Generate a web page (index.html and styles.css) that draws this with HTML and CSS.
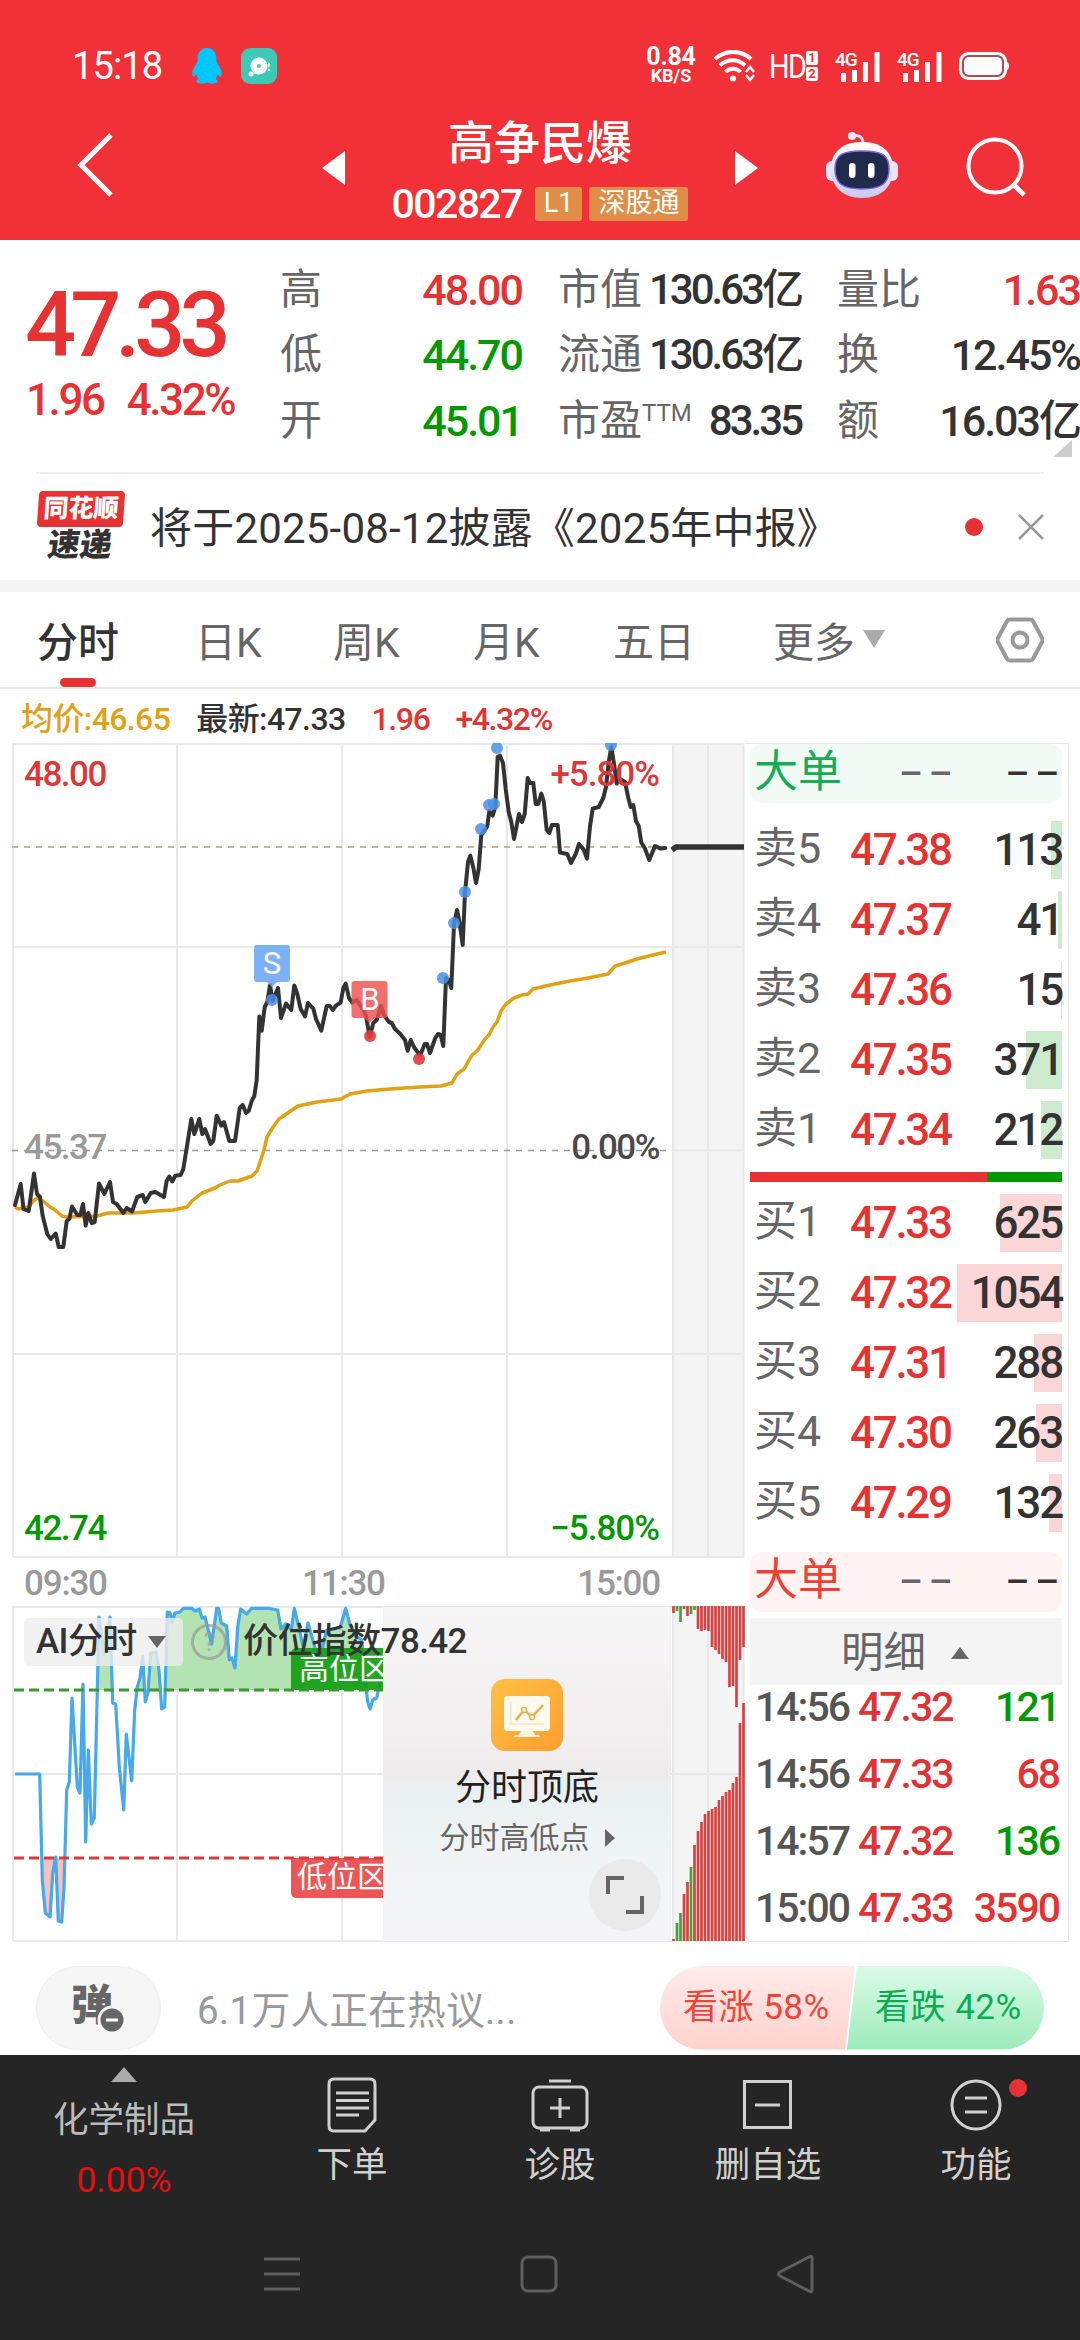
FILE: index.html
```
<!DOCTYPE html>
<html lang="zh-CN">
<head>
    <meta charset="UTF-8">
    <meta name="viewport" content="width=device-width, initial-scale=1.0">
    <title>高争民爆 002827</title>
    <link rel="stylesheet" href="styles.css">
</head>
<body>
    <header>
        <div class="status-bar">
            <span class="clock">15:18</span>
            <svg class="qq" width="30" height="36" viewBox="0 0 30 36"><path d="M15 0c7 0 9.500 5 9.500 12 0 3 3 6 4.500 10 1.500 4 .5 7-1 6.500-1 0-2-2-2.500-2-.5 2-1 3-2 4.500 2 1 2.500 2 1.500 3.500-3 1.500-7 1.500-10 0-3 1.500-7 1.500-10 0-1-1.500-.5-2.500 1.500-3.500-1-1.500-1.500-2.500-2-4.500-.5 0-1.500 2-2.500 2-1.500.5-2.500-2.500-1-6.500 1.500-4 4.500-7 4.500-10C5.500 5 8 0 15 0z" fill="#00c8ff"/></svg>
            <svg width="36" height="36" viewBox="0 0 36 36"><rect width="36" height="36" rx="9" fill="#3ec9b6"/><circle cx="18" cy="18" r="8.500" fill="#fff"/><circle cx="18" cy="18" r="2" fill="#3ec9b6"/><circle cx="10" cy="26" r="2.500" fill="#fff"/><path d="M28 15v4M28 21v2" stroke="#fff" stroke-width="1.500"/></svg>
            <div class="speed"><b>0.84</b><small>KB/S</small></div>
            <svg class="wifi" width="42" height="32" viewBox="0 0 42 32" fill="none" stroke="#fff" stroke-width="4"><path d="M1 9C11-.5 27-.5 37 9M6 15.500c7-7 18-7 25 0M11.500 22c4-4.500 11-4.500 15 0"/><circle cx="19" cy="28.500" r="1.500" stroke-width="3"/><path d="M32 22l4-5 4 5M32 25l4 5 4-5" stroke-width="2.500"/></svg>
            <span class="hd">HD</span>
            <span class="sim"><i>1</i><i>2</i></span>
            <svg class="signal" width="46" height="31" viewBox="0 0 46 31"><text x="0" y="15">4G</text><path d="M8.500 31v-9M19.500 31V19M30.500 31V11M42 31V1" stroke="#fff" stroke-width="5"/></svg>
            <svg class="signal" width="46" height="31" viewBox="0 0 46 31"><text x="0" y="15">4G</text><path d="M8.500 31v-9M19.500 31V19M30.500 31V11M42 31V1" stroke="#fff" stroke-width="5"/></svg>
            <svg class="battery" width="51" height="28" viewBox="0 0 51 28"><rect x="1.500" y="1.500" width="45" height="25" rx="8" fill="#b04a4e" stroke="#fff" stroke-width="3"/><rect x="5" y="5" width="38" height="18" rx="5" fill="#fff"/><path d="M47 9c4 2 4 8 0 10z" fill="#fff"/></svg>
        </div>
        <div class="title-bar">
            <svg width="38" height="66" viewBox="0 0 38 66"><path d="M35 3L5 33l30 30" fill="none" stroke="#fff" stroke-width="5"/></svg>
            <svg class="prev" width="23" height="34" viewBox="0 0 23 34"><path d="M23 0v34L0 17z" fill="#fff"/></svg>
            <div class="stock">
                <h1>高争民爆</h1>
                <div class="code"><span>002827</span><em>L1</em><em>深股通</em></div>
            </div>
            <svg class="next" width="23" height="34" viewBox="0 0 23 34"><path d="M0 0v34l23-17z" fill="#fff"/></svg>
            <svg class="robot" width="74" height="66" viewBox="0 0 74 66">
                <defs><linearGradient id="head" x1="0" y1="0" x2="0" y2="1"><stop offset="0" stop-color="#fff"/><stop offset="1" stop-color="#c9c9f0"/></linearGradient></defs>
                <path d="M27 4c7-2 11 1 11 8" fill="none" stroke="#e4e1fa" stroke-width="3"/>
                <circle cx="27" cy="4" r="4" fill="#eceafa"/>
                <rect x="1" y="29" width="72" height="20" rx="6" fill="#e6e5fa"/>
                <path d="M37 10c20 0 31 10 31 27S57 66 37 66 6 54 6 37 17 10 37 10z" fill="url(#head)"/>
                <path d="M37 19c20 0 27 4 27 18s-7 20-27 20-27-6-27-20 7-18 27-18z" fill="#1f2a4c" stroke="#7b62e6" stroke-width="1.500"/>
                <rect x="24" y="31" width="6.500" height="15" rx="3.200" fill="#fff"/>
                <rect x="43" y="31" width="6.500" height="15" rx="3.200" fill="#fff"/>
            </svg>
            <svg class="search" width="60" height="60" viewBox="0 0 60 60"><circle cx="29" cy="29" r="26.500" fill="none" stroke="#fff" stroke-width="4"/><path d="M47 47l11 11" stroke="#fff" stroke-width="5"/></svg>
        </div>
    </header>

    <section class="quote">
        <div class="price">
            <strong>47.33</strong>
            <div><span>1.96</span><span>4.32%</span></div>
        </div>
        <dl class="col-range">
            <div><dt>高</dt><dd class="up">48.00</dd></div>
            <div><dt>低</dt><dd class="down">44.70</dd></div>
            <div><dt>开</dt><dd class="down">45.01</dd></div>
        </dl>
        <dl class="col-value">
            <div><dt>市值</dt><dd>130.63亿</dd></div>
            <div><dt>流通</dt><dd>130.63亿</dd></div>
            <div><dt>市盈<sup>TTM</sup></dt><dd>83.35</dd></div>
        </dl>
        <dl class="col-volume">
            <div><dt>量比</dt><dd class="up">1.63</dd></div>
            <div><dt>换</dt><dd>12.45%</dd></div>
            <div><dt>额</dt><dd>16.03亿</dd></div>
        </dl>
        <span class="corner"></span>
    </section>

    <section class="news">
        <div class="news-logo"><b>同花顺</b><i>速递</i></div>
        <p>将于2025-08-12披露《2025年中报》</p>
        <span class="dot"></span>
        <svg width="26" height="26" viewBox="0 0 26 26"><path d="M1 1l24 24M25 1L1 25" stroke="#999" stroke-width="2.500"/></svg>
    </section>

    <nav class="tabs">
        <a class="active">分时</a>
        <a>日K</a>
        <a>周K</a>
        <a>月K</a>
        <a>五日</a>
        <a>更多<svg width="22" height="18" viewBox="0 0 22 18"><path d="M0 0h22L11 18z" fill="#aaa"/></svg></a>
        <svg class="setting" width="48" height="46" viewBox="0 0 48 46" fill="none" stroke="#999" stroke-width="4"><path d="M14 2.500h20q2 0 3 1.500l9 17q1 2 0 4l-9 17q-1 1.500-3 1.500H14q-2 0-3-1.500L2 25q-1-2 0-4l9-17q1-1.500 3-1.500z"/><circle cx="24" cy="23" r="7.500"/></svg>
    </nav>

    <div class="chart-info">
        <span class="avg">均价:46.65</span>
        <span>最新:47.33</span>
        <span class="up">1.96</span>
        <span class="up">+4.32%</span>
    </div>

    <main>
        <div class="charts">
            <svg class="price-chart" width="745" height="815" viewBox="0 0 745 815">
                <rect x="672" y="1" width="72" height="813" fill="#f4f4f4"/>
                <g class="grid">
                    <path d="M12 1h732M12 204h732M672 407.500h72M12 611h732M12 814h732"/>
                    <path d="M13 1v813M177 1v813M342 1v813M507 1v813M673 1v813M708 1v813M743.500 1v813"/>
                </g>
                <path d="M12 104h654" stroke="#b9a069" stroke-width="1.500" stroke-dasharray="6 6"/>
                <path d="M12 407.500h654" stroke="#999" stroke-width="1.500" stroke-dasharray="6 6"/>
                <text class="axis mid" x="24" y="416">45.37</text>
                <text class="axis dark" x="659" y="416" text-anchor="end">0.00%</text>
                <polyline class="avg-line" points="15,464 18,466 29,464 33,458 38,455 43,458 50,464 55,467 62,473 67,474 97,473 108,470 133,470 157,468 173,467 187,464 192,458 202,450 215,445 220,442 230,438 238,438 252,433 257,428 264,407 267,394 273,384 279,376 298,363 317,359 341,356 350,351 367,348 390,346 420,344 441,343 452,340 457,331 464,326 472,312 477,308 485,296 489,292 493,284 497,279 501,268 506,261 514,255 522,252 528,251 533,246 550,242 570,238 588,235 608,231 615,223 625,220 637,216 657,211 666,209"/>
                <polyline class="price-line" points="15,462 20.700,441 23.500,466 28.700,468 34,430.500 37,451 40,454 42.700,473 47.300,491 50.700,496 55.700,490.500 58.700,504 63.300,504 66.700,478 69.300,476 72,463.500 77.300,472 80.300,472 83,461 85.700,482.700 88.300,470 91.700,480 94.700,479 99,440.500 104.300,451 110,439 113,459 116.700,461 123.300,470 126.700,465 132,468.500 137.300,454 142.700,452 145.300,459 150.700,450 155.300,449 164,454 166.700,437.700 169.300,433.500 172.300,438.500 175.300,432.700 180.700,432 183.300,426 186.700,405 191.300,376 194.300,391 199.300,376 202.300,391 205,386 210.700,401 213.300,398 216.700,372.700 221.300,382.700 224,379 229.300,398 235,398 239.700,365 242.700,362 246,370 248.700,368 251.700,358 254.300,353 256.700,337 259.300,273.400 261.700,287.700 264.700,264 267.300,259 270,242 272.700,258 278,245 281,275 286,260.600 291.300,267 294.300,242.400 297.300,251 300.700,266 305,273.400 308,260 313.300,265.600 316,276 321.300,287.700 326.700,263 330,263 332.700,267 336,262.700 340.700,259.500 343.300,245 345.700,240.600 349,255 352.300,259.500 356.700,257 363.300,267 366,273 369.700,294 373.300,280 376.700,277 381,262.700 384,272 389,279 391.700,280 395,286 400,290.600 405,297 407.700,307.700 410.700,297 414,304 420,312.700 424.700,301 427,301 430,310 435.300,295 438,291 440.700,292 443.300,303 446,235 448.700,237 451.300,245 454,181.600 457,167 459.300,178 462.700,202 465,149.500 468,119 470.300,112.700 473.300,124.500 476,140 478.700,126 481.300,92 485,87 487.300,83 489.300,68 492.700,72.700 495.300,64 497.700,13.800 500,12.700 503,20 505.700,46 508.700,69 511.300,79 514,96 519,71 522,79 524.700,71 527.700,35 530,40 533.300,40 535.700,61 538.300,61 541.300,50.600 543.700,58 546.700,87 549.300,90 552,82 557.700,82 560,109.500 567.300,111 571,120 575.700,111 579,101 583.700,106.600 587,115.600 590,83.400 592.700,65.600 598.700,64 603.300,55 606,44 608.700,19 611.300,4 614.300,22.700 616.700,40.600 618.300,35 625,39 628.300,55 630.700,64 633.300,62 636,78 638.700,83 641.300,99.500 644.700,105 649.300,117 655,103 660.700,105.600 665.300,105"/>
                <path d="M672 107l4-3h68" fill="none" stroke="#333" stroke-width="5.500"/>
                <g fill="#4a90e8" fill-opacity=".85">
                    <circle cx="497" cy="5" r="6"/><circle cx="611" cy="2" r="6"/><circle cx="489" cy="62" r="6"/><circle cx="494" cy="61" r="6"/><circle cx="481" cy="86" r="6"/><circle cx="465" cy="149" r="6"/><circle cx="454" cy="180" r="6"/><circle cx="443" cy="235" r="6"/><circle cx="272" cy="257" r="6"/>
                </g>
                <g fill="#e33b3b" fill-opacity=".9"><circle cx="370" cy="293" r="6"/><circle cx="419" cy="316" r="6"/></g>
                <path d="M257 202h30q3 0 3 3v31q0 3-3 3h-10l-5 5-5-5h-10q-3 0-3-3v-31q0-3 3-3z" fill="#6aa7f1" fill-opacity=".88"/>
                <path d="M354.500 238h30q3 0 3 3v31q0 3-3 3h-10l-5 5-5-5h-10q-3 0-3-3v-31q0-3 3-3z" fill="#ed4f4f" fill-opacity=".82"/>
                <text class="mark" x="272" y="231">S</text>
                <text class="mark" x="370" y="267">B</text>
                <text class="axis red" x="24" y="43">48.00</text>
                <text class="axis red wide" x="659" y="43" text-anchor="end">+5.80%</text>
                <text class="axis green" x="24" y="797">42.74</text>
                <text class="axis green wide" x="659" y="797" text-anchor="end">−5.80%</text>
            </svg>
            <div class="times"><span>09:30</span><span>11:30</span><span>15:00</span></div>
            <div class="sub-chart">
                <svg width="745" height="336" viewBox="0 0 745 336">
                    <defs>
                        <clipPath id="high"><rect x="13" y="0" width="370" height="84"/></clipPath>
                        <clipPath id="low"><rect x="13" y="252" width="370" height="84"/></clipPath>
                        <clipPath id="main"><rect x="13" y="0" width="370" height="336"/></clipPath>
                        <path id="index" d="M15 168H39.700L42.300 274 45.300 307 50 311 52.700 267 55.700 251 58.300 315 61.700 316 64 282 66.700 184 69.300 176 72 92 77.300 181 80 187 83 78 85.700 236 88.300 144 91.300 218 94.300 212 99 11 104.300 49 110 11 112.700 97 115.700 98 119.300 161 123.700 204 126.300 128 131.700 175 134.700 104 137.300 81 140 72 142.700 50 145.300 96 148 86 150.700 47 156 46 159 64 161.700 103 164.700 101 167.300 6 170 7 172.300 16 175 7 180 6 183.300 2.300H191.700L195 5 199.300 3 202 12 205 11 211.700 38 216.700 2.300H218.500L221.300 17 226.700 20 229.300 54 231.700 52 235 62 237.700 21 240.700 3 246.700 8 251.700 2.300H268.300L277.700 4 281 23 286 18 291.300 24 294.300 2.300 298.300 19 303.300 41 308 17 315 42 320 51 326.700 24 340 22 345.700 2.300 350 19 355 29 361.700 34 366 81 367.700 96 370 103 372.700 94 376.700 92 380 76 383 74"/>
                    </defs>
                    <rect x="672" y="0" width="72" height="335" fill="#f4f4f4"/>
                    <g class="grid"><path d="M12 1h732M12 168h732M12 335h732M13 0v335M177 0v335M342 0v335M673 0v335M708 0v335M743.500 0v335"/></g>
                    <g clip-path="url(#high)"><path d="M97 84L99 11 104.300 49 110 11 112 84zM137 84L140 72 142.700 50 145 84H148L150.700 47 156 46 159 64 160.500 84zM165.500 84L167.300 6 172.300 16 175 7 183.300 2.300H191.700L199.300 3 202 12 205 11 211.700 38 216.700 2.300 221.300 17 226.700 20 229.300 54 235 62 237.700 21 240.700 3 246.700 8 251.700 2.300H268.300L277.700 4 281 23 286 18 291.300 24 294.300 2.300 303.300 41 308 17 320 51 326.700 24 340 22 345.700 2.300 355 29 361.700 34 366 84z" fill="#b3e2b3"/></g>
                    <g clip-path="url(#low)"><path d="M42 252L45.300 307 50 311 55.700 251 58.300 315 61.700 316 65 252z" fill="#f7c0c0"/></g>
                    <use href="#index" class="index-line" clip-path="url(#main)"/>
                    <path d="M297 42h86v42h-92V48q0-6 6-6z" fill="#129e12" fill-opacity=".92"/>
                    <path d="M291 252h92v40h-86q-6 0-6-6z" fill="#e94545" fill-opacity=".9"/>
                    <path d="M14 84h369" stroke="#3a9a2f" stroke-width="3" stroke-dasharray="10 5"/>
                    <path d="M14 252h369" stroke="#d93a3a" stroke-width="3" stroke-dasharray="10 5"/>
                    <g clip-path="url(#main)"><text class="zone" x="299" y="73">高位区</text><text class="zone" x="297" y="281">低位区</text></g>
                    <g fill="none" stroke-width="2.700">
                        <path stroke="#d94040" d="M673.500 0v7M684 0v3M687.500 0v10M698 0v23M701.500 0v25M705 0v24M708.500 0v25M712 0v41M715.500 0v44M719 0v48M722.500 0v53M726 0v56M729.500 0v81M733 0v80M736.500 0v101M740 0v54M743.500 0v41"/>
                        <path stroke="#d94040" d="M673.500 335v-2M684 335v-47M687.500 335v-59M694.500 335v-96M698 335v-110M701.500 335v-119M705 335v-127M708.500 335v-130M712 335v-132M715.500 335v-134M719 335v-141M722.500 335v-145M726 335v-149M729.500 335v-151M733 335v-158M736.500 335v-164M740 335v-218M743.500 335v-238"/>
                        <path stroke="#3fa535" d="M677 0v5M680.500 0v16M691 0v8M694.500 0v4M677 335v-18M680.500 335v-28M691 335v-74"/>
                    </g>
                </svg>
                <div class="promo">
                    <svg width="72" height="72" viewBox="0 0 72 72">
                        <defs><linearGradient id="gold" x1="0" y1="0" x2="1" y2="1"><stop offset="0" stop-color="#ffc044"/><stop offset="1" stop-color="#fd9e2e"/></linearGradient></defs>
                        <rect width="72" height="72" rx="14" fill="url(#gold)"/>
                        <rect x="13" y="17" width="46" height="35" rx="4" fill="#fffaf0"/>
                        <path d="M30 52h12l2 4h3q2 0 2 2H23q0-2 2-2h3z" fill="#fff2dc"/>
                        <path d="M20 23v22h33" fill="none" stroke="#fbe3bd" stroke-width="1.500"/>
                        <path d="M25 41l8-10 8 7 11-12" fill="none" stroke="#f0b040" stroke-width="2.500"/>
                        <circle cx="33" cy="31" r="2.500" fill="#fff" stroke="#f0b040" stroke-width="1.500"/><circle cx="41" cy="38" r="2.500" fill="#fff" stroke="#f0b040" stroke-width="1.500"/>
                    </svg>
                    <h3>分时顶底</h3>
                    <p>分时高低点<svg width="10" height="18" viewBox="0 0 10 18"><path d="M0 0l10 9-10 9z" fill="#666"/></svg></p>
                </div>
                <span class="expand"><svg width="38" height="38" viewBox="0 0 38 38"><path d="M2 18V2h16M36 20v16H20" fill="none" stroke="#666" stroke-width="4"/></svg></span>
                <div class="indicator">
                    <span class="chip">AI分时<svg width="18" height="12" viewBox="0 0 18 12"><path d="M0 0h18L9 12z" fill="#666"/></svg></span>
                    <span class="help">?</span>
                    <span>价位指数78.42</span>
                </div>
            </div>
        </div>

        <aside>
            <div class="big sell"><span>大单</span><i>––</i><b>––</b></div>
            <ul class="book asks">
                <li><span>卖5</span><em>47.38</em><i style="width: 11px"></i><b>113</b></li>
                <li><span>卖4</span><em>47.37</em><i style="width: 4px"></i><b>41</b></li>
                <li><span>卖3</span><em>47.36</em><i style="width: 1px"></i><b>15</b></li>
                <li><span>卖2</span><em>47.35</em><i style="width: 36px"></i><b>371</b></li>
                <li><span>卖1</span><em>47.34</em><i style="width: 21px"></i><b>212</b></li>
            </ul>
            <div class="ratio"></div>
            <ul class="book bids">
                <li><span>买1</span><em>47.33</em><i style="width: 62px"></i><b>625</b></li>
                <li><span>买2</span><em>47.32</em><i style="width: 105px"></i><b>1054</b></li>
                <li><span>买3</span><em>47.31</em><i style="width: 28px"></i><b>288</b></li>
                <li><span>买4</span><em>47.30</em><i style="width: 26px"></i><b>263</b></li>
                <li><span>买5</span><em>47.29</em><i style="width: 13px"></i><b>132</b></li>
            </ul>
            <div class="big buy"><span>大单</span><i>––</i><b>––</b></div>
            <div class="detail-title">明细<svg width="18" height="12" viewBox="0 0 18 12"><path d="M9 0l9 12H0z" fill="#666"/></svg></div>
            <ul class="ticks">
                <li><span>14:56</span><em>47.32</em><b class="down">121</b></li>
                <li><span>14:56</span><em>47.33</em><b class="up">68</b></li>
                <li><span>14:57</span><em>47.32</em><b class="down">136</b></li>
                <li><span>15:00</span><em>47.33</em><b class="up">3590</b></li>
            </ul>
        </aside>
    </main>

    <section class="discuss">
        <span class="danmu">弹<svg width="30" height="30" viewBox="0 0 30 30"><circle cx="15" cy="15" r="13" fill="#666" stroke="#f5f5f5" stroke-width="3"/><path d="M9 15h12" stroke="#fff" stroke-width="3"/></svg></span>
        <p>6.1万人正在热议...</p>
        <div class="vote"><span class="rise">看涨 58%</span><span class="fall">看跌 42%</span></div>
    </section>

    <footer>
        <div class="toolbar">
            <div class="sector">
                <svg width="26" height="15" viewBox="0 0 26 15"><path d="M13 0l13 15H0z" fill="#aaa"/></svg>
                <span>化学制品</span>
                <em>0.00%</em>
            </div>
            <div class="tool">
                <svg width="50" height="56" viewBox="0 0 50 56" fill="none" stroke="#d0d0d0" stroke-width="3"><path d="M7 2h36q5 0 5 5v36L38 54H7q-5 0-5-5V7q0-5 5-5z"/><path d="M9 16h33M9 23.500h33M9 31h33M9 38h23"/></svg>
                <span>下单</span>
            </div>
            <div class="tool">
                <svg width="58" height="56" viewBox="0 0 58 56" fill="none" stroke="#d0d0d0" stroke-width="3"><path d="M18 4h22M19 31h20M29 21v20"/><rect x="2" y="10" width="54" height="41" rx="6"/><path d="M9 52.500h10M39 52.500h10" stroke-width="4"/></svg>
                <span>诊股</span>
            </div>
            <div class="tool">
                <svg width="50" height="56" viewBox="0 0 50 56" fill="none" stroke="#d0d0d0" stroke-width="3"><rect x="1.500" y="4.500" width="46" height="46"/><path d="M12 28h25"/></svg>
                <span>删自选</span>
            </div>
            <div class="tool">
                <svg width="54" height="56" viewBox="0 0 54 56" fill="none" stroke="#d0d0d0" stroke-width="3"><circle cx="27" cy="28" r="24"/><path d="M16 21h22M16 35h22"/></svg>
                <span>功能</span>
                <i class="badge"></i>
            </div>
        </div>
        <div class="system-nav">
            <svg width="38" height="40" viewBox="0 0 38 40"><path d="M1 5h36M1 20h36M1 35h36" stroke="#5e5e5e" stroke-width="3"/></svg>
            <svg width="38" height="40" viewBox="0 0 38 40"><rect x="2" y="3" width="34" height="34" rx="6" fill="none" stroke="#5e5e5e" stroke-width="3"/></svg>
            <svg width="38" height="40" viewBox="0 0 38 40"><path d="M35 4v32q0 3-3 1L3 22q-3-2 0-4L32 3q3-2 3 1z" fill="none" stroke="#5e5e5e" stroke-width="3"/></svg>
        </div>
    </footer>
</body>
</html>
```
FILE: styles.css
```
* {
    box-sizing: border-box;
}

body {
    margin: 0;
    width: 1080px;
    height: 2340px;
    overflow: hidden;
    font-family: Roboto, "Noto Sans CJK SC", sans-serif;
    background-color: #fff;
    color: #333;
}

svg {
    display: block;
    flex-shrink: 0;
}

h1, h3, p, ul, dl, dd {
    margin: 0;
    padding: 0;
}

ul {
    list-style: none;
}

i, em {
    font-style: normal;
}

.up {
    color: #e63232;
}

.down {
    color: #009900;
}

/* header */
header {
    height: 240px;
    background-color: #f13038;
    color: #fff;
}

.status-bar {
    display: flex;
    align-items: center;
    height: 112px;
    padding: 20px 69px 0 72px;
}

.clock {
    width: 120px;
    font-size: 38px;
    letter-spacing: -0.9px;
}

.qq {
    margin-right: 19px;
}

.speed {
    display: flex;
    flex-direction: column;
    align-items: center;
    width: 56px;
    margin-left: 366px;
    line-height: 20px;
}

.speed b {
    font-size: 25px;
    letter-spacing: -0.2px;
}

.speed small {
    font-size: 18px;
    font-weight: bold;
    line-height: 18px;
}

.wifi {
    margin-left: 15px;
}

.hd {
    margin-left: 13px;
    font-size: 34px;
    letter-spacing: -2px;
    transform: scaleX(0.85);
    transform-origin: left;
    width: 37px;
}

.sim {
    display: flex;
    flex-direction: column;
    gap: 2px;
    margin-right: 17px;
}

.sim i {
    width: 12px;
    height: 14px;
    border-radius: 2px;
    background-color: #fff;
    color: #f13038;
    font-size: 13px;
    font-weight: bold;
    line-height: 14px;
    text-align: center;
}

.signal {
    margin-right: 16px;
    overflow: visible;
}

.signal text {
    fill: #fff;
    font-size: 19px;
    font-weight: 500;
    letter-spacing: -1px;
}

.title-bar {
    display: flex;
    align-items: center;
    height: 128px;
    padding: 0 53px 22px 76px;
}

.title-bar .prev {
    margin: 5px 0 0 208px;
}

.title-bar .next {
    margin-top: 5px;
}

.stock {
    display: flex;
    flex-direction: column;
    align-items: center;
    width: 390px;
    padding-top: 20px;
}

.stock h1 {
    font-size: 46px;
    font-weight: 500;
    line-height: 58px;
}

.code {
    display: flex;
    align-items: center;
    gap: 7px;
    height: 64px;
}

.code span {
    margin-right: 6px;
    font-size: 41px;
    font-weight: 500;
    letter-spacing: -1.6px;
}

.code em {
    height: 34px;
    padding: 0 9px;
    border-radius: 3px;
    background-color: #e08d48;
    font-size: 27px;
    line-height: 32px;
}

.robot {
    margin-left: 67px;
}

.search {
    margin: 4px 0 0 67px;
}

/* quote summary */
.quote {
    position: relative;
    display: flex;
    height: 232px;
    padding-top: 17px;
}

.price {
    width: 280px;
    padding: 20px 0 0 25px;
    color: #e63232;
    font-weight: 500;
}

.price strong {
    display: block;
    font-size: 90px;
    font-weight: 500;
    line-height: 98px;
    letter-spacing: -6px;
}

.price div {
    display: flex;
    gap: 23px;
    padding-left: 1px;
    font-size: 44px;
    line-height: 50px;
    letter-spacing: -2.4px;
}

dl div {
    display: flex;
    align-items: center;
    justify-content: space-between;
    height: 65.500px;
    font-size: 42px;
    line-height: 60px;
    white-space: nowrap;
}

dt {
    color: #666;
}

dd {
    font-size: 43px;
    font-weight: 500;
    letter-spacing: -2px;
}

sup {
    font-size: 24px;
    line-height: 0;
    vertical-align: 14px;
}

.col-range {
    width: 242px;
}

.col-value {
    width: 243px;
    margin-left: 36px;
}

.col-value dd {
    font-size: 42px;
    letter-spacing: -3px;
}

.col-volume {
    width: 243px;
    margin-left: 36px;
}

.corner {
    position: absolute;
    right: 8px;
    bottom: 15px;
    border-left: 19px solid transparent;
    border-bottom: 17px solid #ccc;
}

/* news */
.news {
    display: flex;
    align-items: center;
    height: 108px;
    margin: 0 36px;
    border-top: 2px solid #eee;
}

.news p {
    flex: 1;
    padding: 0 0 5px 25px;
    font-size: 42px;
    letter-spacing: 0.2px;
}

.news-logo {
    display: flex;
    flex-direction: column;
    align-items: center;
    width: 89px;
    line-height: 36px;
}

.news-logo b {
    width: 86px;
    border-radius: 4px;
    background-color: #e63232;
    color: #fff;
    font-size: 25px;
    font-weight: 900;
    text-align: center;
    transform: skewX(-4deg);
}

.news-logo i {
    font-size: 32px;
    font-weight: 900;
    transform: skewX(-8deg);
}

.dot {
    width: 18px;
    height: 18px;
    margin-right: 35px;
    border-radius: 50%;
    background-color: #e63232;
}

/* period tabs */
.tabs {
    display: grid;
    grid-template-columns: 158px 138px 140px 140px 160px 223px 1fr;
    align-items: center;
    height: 109px;
    padding-left: 37px;
    border-top: 12px solid #f4f4f4;
    border-bottom: 2px solid #e6e6e6;
    font-size: 41px;
    color: #666;
}

.tabs a {
    display: flex;
    align-items: center;
    height: 95px;
    padding-bottom: 2px;
    white-space: nowrap;
}

.tabs a svg {
    margin-left: 8px;
}

.tabs .active {
    position: relative;
    color: #333;
    font-weight: 500;
}

.tabs .active::after {
    content: "";
    position: absolute;
    left: 23px;
    bottom: 0;
    width: 36px;
    height: 9px;
    border-radius: 5px;
    background-color: #e63232;
}

.chart-info {
    display: flex;
    gap: 26px;
    height: 54px;
    padding-left: 21px;
    font-size: 32px;
    font-weight: 500;
    line-height: 60px;
    letter-spacing: -0.6px;
}

.chart-info .up {
    letter-spacing: -1.4px;
}

.avg {
    color: #e2a015;
}

/* charts */
main {
    display: flex;
    height: 1199px;
}

.charts {
    width: 745px;
}

.grid path {
    fill: none;
    stroke: #e8e8e8;
    stroke-width: 2;
}

.price-line {
    fill: none;
    stroke: #333;
    stroke-width: 4;
    stroke-linejoin: round;
    stroke-linecap: round;
}

.avg-line {
    fill: none;
    stroke: #e2a015;
    stroke-width: 3.500;
    stroke-linejoin: round;
}

.index-line {
    fill: none;
    stroke: #45a9ea;
    stroke-width: 3.200;
    stroke-linejoin: round;
}

.axis {
    font-size: 35px;
    font-weight: 500;
    letter-spacing: -1.5px;
}

.axis.wide {
    letter-spacing: -1px;
}

.axis.red {
    fill: #dc3838;
}

.axis.green {
    fill: #009900;
}

.axis.mid {
    fill: #999;
}

.axis.dark {
    fill: #4a4a4a;
}

.mark {
    fill: #fff;
    font-size: 31px;
    text-anchor: middle;
}

.times {
    display: grid;
    grid-template-columns: 278px 1fr auto;
    height: 48px;
    padding: 0 85px 0 24px;
    color: #999;
    font-size: 35px;
    font-weight: 500;
    line-height: 51px;
    letter-spacing: -1.2px;
}

.sub-chart {
    position: relative;
    height: 336px;
}

.zone {
    fill: #fff;
    font-size: 30px;
}

.indicator {
    position: absolute;
    left: 24px;
    top: 12px;
    display: flex;
    align-items: center;
    height: 48px;
    font-size: 35px;
    font-weight: 500;
    line-height: 48px;
    letter-spacing: -0.6px;
}

.chip {
    display: flex;
    align-items: center;
    gap: 11px;
    width: 159px;
    height: 48px;
    padding-left: 12px;
    border-radius: 5px;
    background-color: rgba(238, 238, 238, 0.8);
}

.help {
    width: 36px;
    height: 36px;
    margin: 0 16px 0 8px;
    border: 3px solid #999;
    border-radius: 50%;
    color: #999;
    font-size: 26px;
    font-weight: 400;
    line-height: 30px;
    text-align: center;
    opacity: 0.7;
}

.promo {
    position: absolute;
    left: 383px;
    top: 1px;
    display: flex;
    flex-direction: column;
    align-items: center;
    width: 288px;
    height: 334px;
    padding: 72px 0 0 0;
    background: linear-gradient(#f5f5f6, #f3eef0 38%, #eeebec 49%, #eaf0f0 57%, #f0f4f5 75%, #f5f4f7);
    color: #222;
}

.promo h3 {
    margin-top: 12px;
    font-size: 36px;
    font-weight: 400;
    line-height: 50px;
}

.promo p {
    display: flex;
    align-items: center;
    gap: 15px;
    color: #666;
    font-size: 30px;
    line-height: 50px;
}

.expand {
    position: absolute;
    left: 589px;
    top: 253px;
    display: flex;
    align-items: center;
    justify-content: center;
    width: 72px;
    height: 72px;
    border-radius: 50%;
    background-color: #eaeaea;
}

/* order book */
aside {
    width: 324px;
    padding: 0 6px 0 5px;
    border: 1px solid #e8e8e8;
    border-left: 0;
}

.big {
    display: flex;
    align-items: center;
    height: 59px;
    padding: 0 0 0 4px;
    border-radius: 12px;
    font-size: 44px;
    line-height: 48px;
}

.big span {
    width: 145px;
    padding-bottom: 4px;
}

.big i, .big b {
    flex: 1;
    font-size: 37px;
    font-weight: 500;
    letter-spacing: 6px;
}

.big i {
    color: #666;
}

.big b {
    margin-right: -3px;
    text-align: right;
}

.sell {
    background-color: #f2faf6;
    color: #10ae55;
}

.buy {
    height: 60px;
    margin-top: 14px;
    background-color: #fff4f3;
    color: #ee4035;
}

.sell b, .buy b {
    color: #333;
}

.asks {
    padding-top: 12px;
}

.book li {
    position: relative;
    display: flex;
    align-items: center;
    height: 70px;
    padding-left: 4px;
    font-size: 43px;
    line-height: 60px;
    color: #666;
}

.book span {
    width: 96px;
    padding-bottom: 4px;
}

.book em {
    width: 105px;
    color: #e63232;
    font-size: 44px;
    font-weight: 500;
    letter-spacing: -2.3px;
}

.book b {
    position: relative;
    flex: 1;
    color: #333;
    font-size: 44px;
    font-weight: 500;
    letter-spacing: -2.2px;
    text-align: right;
}

/* volume bar behind the amount */
.book i {
    position: absolute;
    right: 0;
    top: 6px;
    height: 58px;
    background-color: #cdebcd;
}

.bids i {
    background-color: #fad6d6;
}

.ratio {
    height: 10px;
    margin: 7px 0 6px;
    background: linear-gradient(to right, #e63232 76%, #009900 76%);
}

.detail-title {
    display: flex;
    align-items: center;
    gap: 25px;
    height: 67px;
    margin-top: 6px;
    padding: 2px 0 0 91px;
    background-color: #f4f4f4;
    color: #666;
    font-size: 42.500px;
    line-height: 60px;
}

.ticks {
    margin-top: -12px;
}

.ticks li {
    display: flex;
    align-items: center;
    height: 67px;
    padding: 0 3px 0 5px;
    font-size: 41px;
    font-weight: 500;
    letter-spacing: -2px;
}

.ticks span {
    width: 103px;
    color: #555;
}

.ticks em {
    width: 95px;
    color: #e03434;
    letter-spacing: -2px;
}

.ticks b {
    flex: 1;
    font-weight: 500;
    text-align: right;
}

/* discussion strip */
.discuss {
    display: flex;
    align-items: center;
    height: 113px;
    padding: 18px 36px 0;
}

.discuss p {
    flex: 1;
    padding: 0 0 2px 36px;
    color: #999;
    font-size: 38.500px;
    letter-spacing: 0.4px;
}

.danmu {
    position: relative;
    width: 125px;
    height: 84px;
    padding-left: 34px;
    border: 1px solid #eee;
    border-radius: 42px;
    background-color: #f5f5f5;
    color: #666;
    font-size: 42px;
    font-weight: 900;
    line-height: 77px;
}

.danmu svg {
    position: absolute;
    left: 60px;
    top: 38px;
}

.vote {
    display: flex;
    width: 384px;
    height: 84px;
    border-radius: 42px;
    overflow: hidden;
    font-size: 35px;
    line-height: 84px;
    letter-spacing: 0.5px;
}

.rise {
    width: 196px;
    padding-left: 23px;
    background: linear-gradient(#ffebe9, #ffd2ce);
    color: #ee4538;
    clip-path: polygon(0 0, 100% 0, 95% 100%, 0 100%);
}

.fall {
    width: 198px;
    margin-left: -8px;
    padding-left: 28px;
    background: linear-gradient(#dcfae8, #9cebbb);
    color: #08ad52;
    clip-path: polygon(5% 0, 100% 0, 100% 100%, 0 100%);
}

/* bottom bars */
footer {
    height: 286px;
    background-color: #252525;
    color: #d0d0d0;
    font-size: 35.500px;
}

.toolbar {
    display: grid;
    grid-template-columns: 248px 208px 208px 208px 208px;
    height: 180px;
}

.sector, .tool {
    display: flex;
    flex-direction: column;
    align-items: center;
}

.sector {
    padding-top: 12px;
    color: #bbb;
}

.sector span {
    margin-top: 12px;
    line-height: 52px;
}

.sector em {
    margin-top: 8px;
    color: #e60f0f;
    line-height: 52px;
}

.tool {
    position: relative;
    padding-top: 22px;
}

.tool span {
    margin-top: 6px;
    line-height: 52px;
}

.badge {
    position: absolute;
    right: 53px;
    top: 24px;
    width: 18px;
    height: 18px;
    border-radius: 50%;
    background-color: #e63232;
}

.system-nav {
    display: flex;
    justify-content: space-between;
    padding: 19px 265px 0 263px;
}
```
